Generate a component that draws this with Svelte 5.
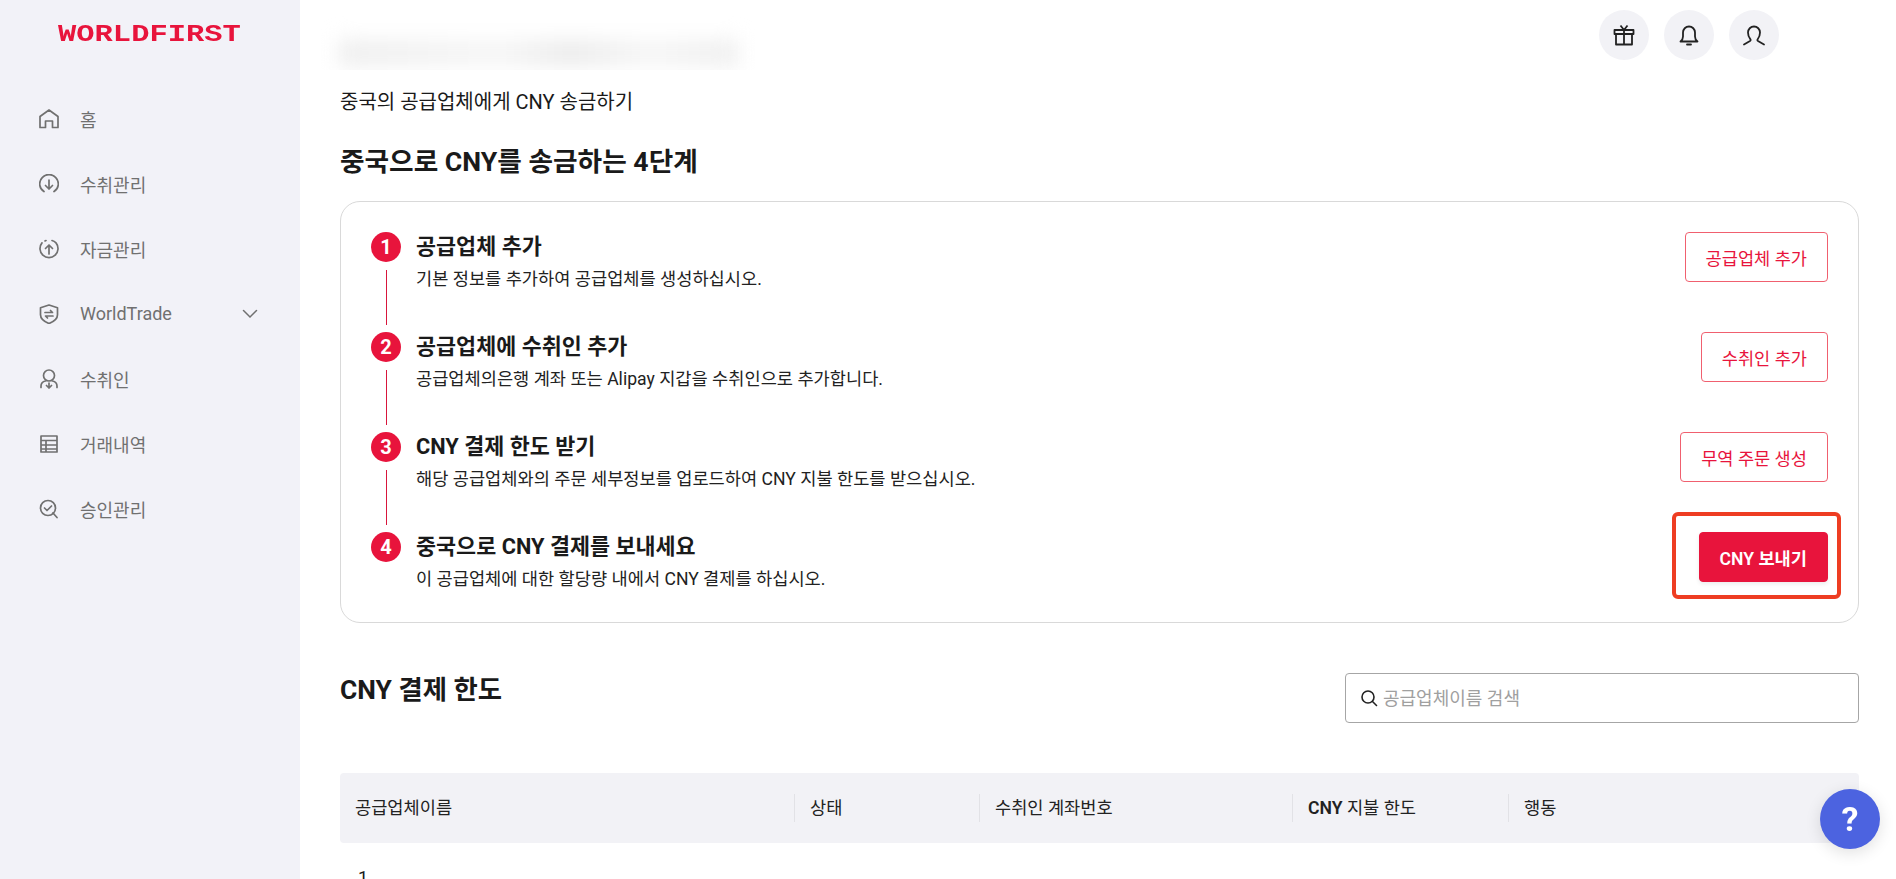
<script>
  const nav = [
    { label: '홈', icon: 'home' },
    { label: '수취관리', icon: 'down' },
    { label: '자금관리', icon: 'up' },
    { label: 'WorldTrade', icon: 'shield', caret: true },
    { label: '수취인', icon: 'payee' },
    { label: '거래내역', icon: 'list' },
    { label: '승인관리', icon: 'approve' }
  ];

  const steps = [
    { title: '공급업체 추가', desc: '기본 정보를 추가하여 공급업체를 생성하십시오.', action: '공급업체 추가' },
    { title: '공급업체에 수취인 추가', desc: '공급업체의은행 계좌 또는 Alipay 지갑을 수취인으로 추가합니다.', action: '수취인 추가' },
    { title: 'CNY 결제 한도 받기', desc: '해당 공급업체와의 주문 세부정보를 업로드하여 CNY 지불 한도를 받으십시오.', action: '무역 주문 생성' },
    { title: '중국으로 CNY 결제를 보내세요', desc: '이 공급업체에 대한 할당량 내에서 CNY 결제를 하십시오.', action: 'CNY 보내기', primary: true }
  ];

  const columns = [
    { label: '공급업체이름', width: 454 },
    { label: '상태', width: 185 },
    { label: '수취인 계좌번호', width: 313 },
    { label: '지불 한도', prefix: 'CNY', width: 216 },
    { label: '행동', width: 351 }
  ];
</script>

<div class="layout">
  <aside class="sidebar">
    <div class="logo">WORLDFIRST</div>
    <nav>
      {#each nav as item}
        <div class="nav-item">
          <svg class="nav-icon" viewBox="0 0 20 20" fill="none" stroke="currentColor" stroke-width="1.7" stroke-linecap="round" stroke-linejoin="round">
            {#if item.icon === 'home'}
              <path d="M1 18.500V7.500L10 1l9 6.500v11h-5.500v-6.500h-7v6.500H1z" />
            {:else if item.icon === 'down'}
              <path d="M5 17.600A9 9 0 0 1 3 3.900 9 9 0 0 1 17 3.900a9 9 0 0 1-2 13.700" />
              <path d="M10 6v9M6.500 11.500 10 15l3.500-3.500" />
            {:else if item.icon === 'up'}
              <path d="M3 3.900A9 9 0 1 0 17 3.900 9 9 0 0 0 13 1.500M7 1.500a9 9 0 0 0-1 .4" />
              <path d="M10 15V6M6.500 9.500 10 6l3.500 3.500" />
            {:else if item.icon === 'shield'}
              <path d="M10 1l8.500 2.800v7c0 4-3.500 6.800-8.500 8.700-5-1.900-8.500-4.700-8.500-8.700v-7L10 1z" />
              <path d="M6 8.500h7.500L11.500 6.500M14 12H6.500l2 2" />
            {:else if item.icon === 'payee'}
              <circle cx="10" cy="6.500" r="5.500" />
              <path d="M2 18.500V17c0-2.500 2-4.500 4.500-5M18 18.500V17c0-2.500-2-4.500-4.500-5M10 14v5M7.500 16.500 10 19l2.500-2.500" />
            {:else if item.icon === 'list'}
              <path d="M2 2h16v16H2zM2 6.500h16M2 11h16M2 15h16M7 6.500V18" />
            {:else}
              <circle cx="9" cy="9" r="7.500" />
              <path d="M5.500 9l2.500 2.500 4.500-4.500M14 14l4 4.500" />
            {/if}
          </svg>
          <span>{item.label}</span>
          {#if item.caret}
            <svg class="caret" viewBox="0 0 16 10" fill="none" stroke="currentColor" stroke-width="1.500" stroke-linecap="round"><path d="M1.500 1.500 8 8l6.500-6.500" /></svg>
          {/if}
        </div>
      {/each}
    </nav>
  </aside>

  <main class="content">
    <header class="topbar">
      <div class="blur-clip"><div class="blurred"></div></div>
      <div class="top-actions">
        <button class="round" aria-label="gift">
          <svg viewBox="0 0 24 24" fill="none" stroke="currentColor" stroke-width="1.800" stroke-linejoin="round"><path d="M2.500 7h19v4h-19zM4 11v10.500h16V11zM12 7v14.500M8.500 2.500 12 7l3.500-4.500" /></svg>
        </button>
        <button class="round" aria-label="notifications">
          <svg viewBox="0 0 24 24" fill="none" stroke="currentColor" stroke-width="1.800" stroke-linecap="round" stroke-linejoin="round"><path d="M3.500 18.500c2-1.500 2.500-3 2.500-5V9.500a6 6 0 0 1 12 0v4c0 2 .5 3.500 2.500 5h-17zM10 21.500h4" /></svg>
        </button>
        <button class="round" aria-label="profile">
          <svg viewBox="0 0 24 24" fill="none" stroke="currentColor" stroke-width="1.800" stroke-linecap="round" stroke-linejoin="round"><path d="M2 21.500l6-3.500c.800-.500.800-1.200.300-1.800C6.500 14 6 12 6 9.500a6 6 0 0 1 12 0c0 2.500-.500 4.500-2.300 6.700-.500.600-.500 1.300.300 1.800l6 3.500" /></svg>
        </button>
      </div>
    </header>

    <p class="subtitle">중국의 공급업체에게 CNY 송금하기</p>
    <h2 class="steps-heading">중국으로 CNY를 송금하는 4단계</h2>

    <section class="steps-card">
      {#each steps as step, i}
        <div class="step">
          <div class="marker">
            <div class="num">{i + 1}</div>
            {#if i < steps.length - 1}<div class="line"></div>{/if}
          </div>
          <div class="step-text">
            <h4>{step.title}</h4>
            <p>{step.desc}</p>
          </div>
          <div class="action-wrap">
            <button class="action" class:primary={step.primary}>{step.action}</button>
            {#if step.primary}<div class="highlight"></div>{/if}
          </div>
        </div>
      {/each}
    </section>

    <div class="limit-head">
      <h2>CNY 결제 한도</h2>
      <div class="search">
        <svg viewBox="0 0 18 18" fill="none" stroke="#222" stroke-width="1.600" stroke-linecap="round"><circle cx="8" cy="8" r="6" /><path d="M12.500 12.500 16.500 16.500" /></svg>
        <span>공급업체이름 검색</span>
      </div>
    </div>

    <div class="table-head">
      {#each columns as col, i}
        <div class="th" class:divided={i > 0} style="width: {col.width}px">{#if col.prefix}<b>{col.prefix}</b>{' '}{/if}{col.label}</div>
      {/each}
    </div>
    <div class="row-num">1</div>
  </main>

  <button class="help" aria-label="help">?</button>
</div>

<style>
  :global(body) { margin: 0; background: #fff; overflow: hidden; }
  .layout { display: flex; height: 879px; overflow: hidden; font-family: Roboto, "Noto Sans CJK KR", sans-serif; color: #1a1a1a; }
  .sidebar { width: 300px; flex: none; background: #f2f2f8; }
  .logo { margin: 21px 0 0 58px; height: 28px; line-height: 28px; font-family: "Liberation Mono", monospace; font-weight: 700; font-size: 24px; color: #e8143c; transform: scaleX(1.27); transform-origin: left center; white-space: nowrap; }
  nav { margin-top: 37px; }
  .nav-item { position: relative; display: flex; align-items: center; height: 65px; padding-left: 39px; color: #707070; font-size: 18px; }
  .nav-icon { width: 20px; height: 20px; margin-right: 21px; flex: none; }
  .caret { position: absolute; left: 242px; width: 16px; height: 10px; }
  .content { flex: 1; min-width: 0; padding: 0 37px 0 40px; }
  .topbar { position: relative; display: flex; justify-content: flex-end; height: 80px; padding: 10px 80px 0 0; box-sizing: border-box; }
  .blur-clip { position: absolute; left: -20px; top: 10px; width: 450px; height: 60px; overflow: hidden; }
  .blurred { margin: 30px 0 0 18px; width: 400px; height: 26px; background: linear-gradient(90deg, #eee, #f6f6f6 40%, #ebebeb 58%, #f6f6f6 78%, #eee); filter: blur(10px); }
  .top-actions { display: flex; gap: 15px; }
  .round { width: 50px; height: 50px; padding: 0; border: none; border-radius: 50%; background: #f2f2f6; color: #222; display: flex; align-items: center; justify-content: center; }
  .round svg { width: 24px; height: 24px; }
  .subtitle { margin: 8px 0 0; font-size: 20px; line-height: 28px; }
  .steps-heading { margin: 28px 0 0; font-size: 26.7px; line-height: 36px; font-weight: 700; }
  .steps-card { margin-top: 21px; height: 422px; box-sizing: border-box; padding: 30px 30px 0; border: 1px solid #d9d9d9; border-radius: 20px; }
  .step { display: flex; height: 100px; }
  .marker { width: 30px; flex: none; margin-right: 15px; display: flex; flex-direction: column; align-items: center; }
  .num { width: 30px; height: 30px; border-radius: 50%; background: #e8143c; color: #fff; font-weight: 700; font-size: 20px; line-height: 30px; text-align: center; }
  .line { width: 1px; height: 55px; margin-top: 8px; background: #d8163c; }
  .step-text { flex: 1; }
  .step-text h4 { margin: 0; font-size: 21.8px; line-height: 30px; font-weight: 700; }
  .step-text p { margin: 4px 0 0; font-size: 17.6px; line-height: 26px; color: #222; }
  .action-wrap { position: relative; align-self: flex-start; }
  .action { display: block; height: 50px; padding: 0 20px; background: #fff; border: 1px solid #f0606f; border-radius: 4px; color: #e8143c; font-family: inherit; font-size: 17.6px; }
  .action.primary { background: #e8143c; border-color: #e8143c; color: #fff; font-weight: 600; box-shadow: 0 2px 4px rgba(0,0,0,0.08); }
  .highlight { position: absolute; left: -27px; right: -13px; top: -20px; bottom: -17px; border: 4px solid #ee3d22; border-radius: 6px; }
  .limit-head { display: flex; justify-content: space-between; margin-top: 50px; }
  .limit-head h2 { margin: 0; font-size: 26.4px; line-height: 34px; font-weight: 700; }
  .search { width: 514px; height: 50px; box-sizing: border-box; display: flex; align-items: center; gap: 5px; padding-left: 14px; border: 1px solid #a6a6a6; border-radius: 4px; color: #a0a0a0; font-size: 18px; }
  .search svg { width: 18px; height: 18px; }
  .search span { margin-top: -3px; }
  .table-head { display: flex; align-items: center; height: 70px; margin-top: 50px; background: #f2f2f6; border-radius: 4px; }
  .th { box-sizing: border-box; padding-left: 15px; font-size: 17.6px; line-height: 28px; color: #222; }
  .th b { font-weight: 600; }
  .th.divided { border-left: 1px solid #e2e2e6; }
  .row-num { margin: 22px 0 0 18px; font-size: 18px; line-height: 26px; }
  .help { position: fixed; left: 1820px; top: 789px; width: 60px; height: 60px; padding: 0; border: none; border-radius: 50%; background: #4c63e0; color: #fff; font-family: inherit; font-size: 34px; font-weight: 700; box-shadow: 0 4px 16px rgba(0,0,0,0.12); }
</style>
